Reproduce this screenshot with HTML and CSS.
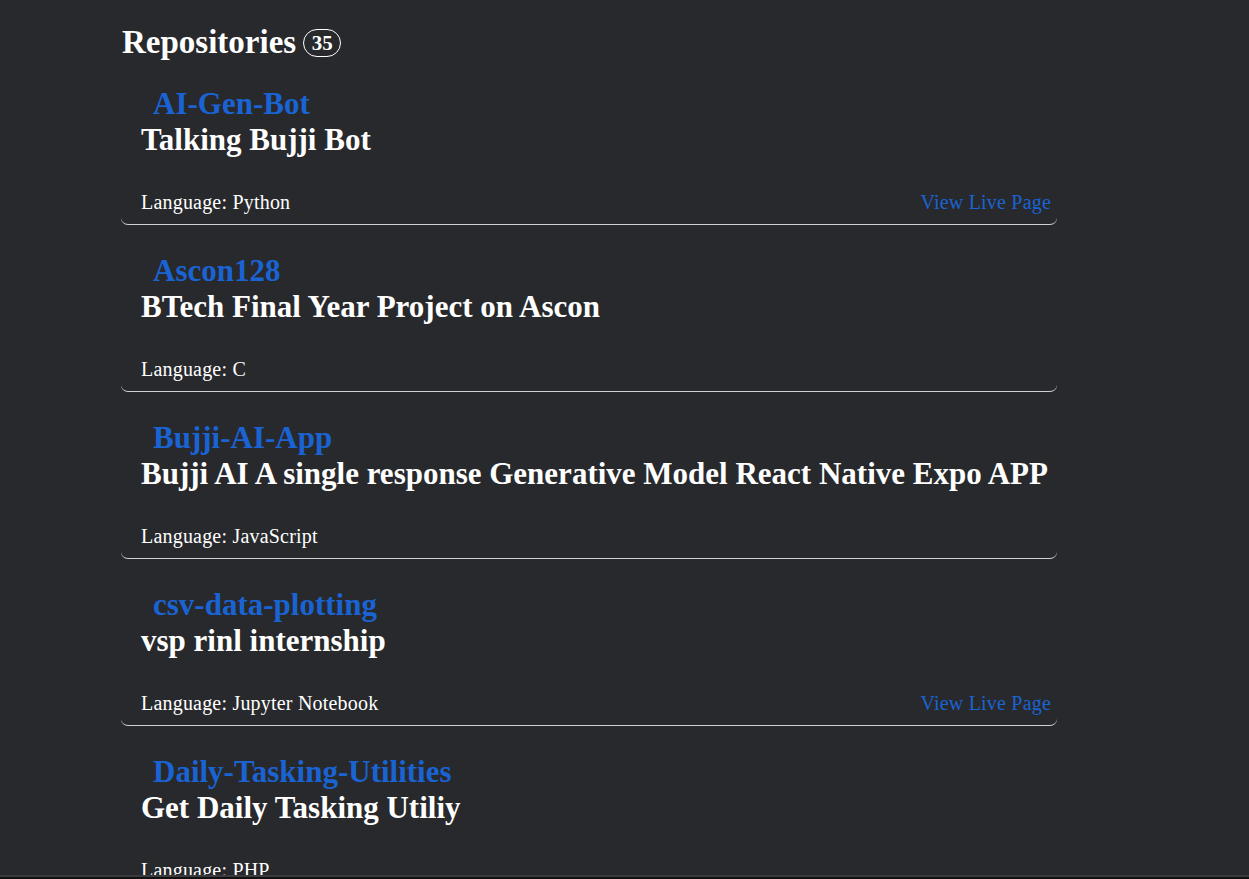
FILE: index.html
```html
<!DOCTYPE html>
<html lang="en">
<head>
<meta charset="utf-8">
<title>Repositories</title>
<link rel="stylesheet" href="styles.css">
</head>
<body>
<main class="page">
  <h1 class="heading">Repositories <span class="count">35</span></h1>
  <section class="repo">
    <h2 class="repo-name"><a href="#">AI-Gen-Bot</a></h2>
    <h3 class="repo-desc">Talking Bujji Bot</h3>
    <div class="repo-meta"><span>Language: Python</span><a href="#" class="live">View Live Page</a></div>
  </section>
  <section class="repo">
    <h2 class="repo-name"><a href="#">Ascon128</a></h2>
    <h3 class="repo-desc">BTech Final Year Project on Ascon</h3>
    <div class="repo-meta"><span>Language: C</span></div>
  </section>
  <section class="repo">
    <h2 class="repo-name"><a href="#">Bujji-AI-App</a></h2>
    <h3 class="repo-desc">Bujji AI A single response Generative Model React Native Expo APP</h3>
    <div class="repo-meta"><span>Language: JavaScript</span></div>
  </section>
  <section class="repo">
    <h2 class="repo-name"><a href="#">csv-data-plotting</a></h2>
    <h3 class="repo-desc">vsp rinl internship</h3>
    <div class="repo-meta"><span>Language: Jupyter Notebook</span><a href="#" class="live">View Live Page</a></div>
  </section>
  <section class="repo">
    <h2 class="repo-name"><a href="#">Daily-Tasking-Utilities</a></h2>
    <h3 class="repo-desc">Get Daily Tasking Utiliy</h3>
    <div class="repo-meta"><span>Language: PHP</span></div>
  </section>
</main>
<div class="bottom-edge"></div>
</body>
</html>
```
FILE: styles.css
```css
html, body {
  margin: 0;
  padding: 0;
  background: #28292c;
  color: #ffffff;
  font-family: "Liberation Serif", "Times New Roman", serif;
  overflow: hidden;
  height: 879px;
}
.page {
  width: 936px;
  margin-left: 121px;
  padding-top: 24px;
}
.heading {
  margin: 0 0 0 1px;
  font-size: 33px;
  font-weight: bold;
  line-height: 36px;
  display: flex;
  align-items: center;
  gap: 7px;
}
.count {
  display: inline-flex;
  align-items: center;
  justify-content: center;
  font-size: 21px;
  height: 28px;
  min-width: 38px;
  border: 1px solid #ffffff;
  border-radius: 15px;
  box-sizing: border-box;
  margin-top: 2px;
}
.repo {
  border-bottom: 1px solid #d0d0d0;
  border-radius: 0 0 7px 7px;
  padding: 0 6px 0 20px;
  height: 167px;
  box-sizing: border-box;
  display: flex;
  flex-direction: column;
}
.page .repo:first-of-type {
  height: 165px;
}
.repo-name {
  margin: 0 0 0 12px;
  font-size: 31px;
  line-height: 36px;
  padding-top: 28px;
}
.page .repo:first-of-type .repo-name {
  padding-top: 26px;
}
.repo-name a {
  color: #1a63d3;
  text-decoration: none;
}
.repo-desc {
  margin: 0;
  font-size: 31px;
  line-height: 36px;
  white-space: nowrap;
}
.repo-meta {
  margin-top: auto;
  margin-bottom: 10px;
  display: flex;
  justify-content: space-between;
  font-size: 20px;
  letter-spacing: 0.2px;
  line-height: 24px;
}
.live {
  color: #1a63d3;
  text-decoration: none;
}
.bottom-edge {
  position: fixed;
  left: 0;
  right: 0;
  bottom: 0;
  height: 2px;
  background: #111;
  border-top: 2px solid #3a3b3e;
}
```
